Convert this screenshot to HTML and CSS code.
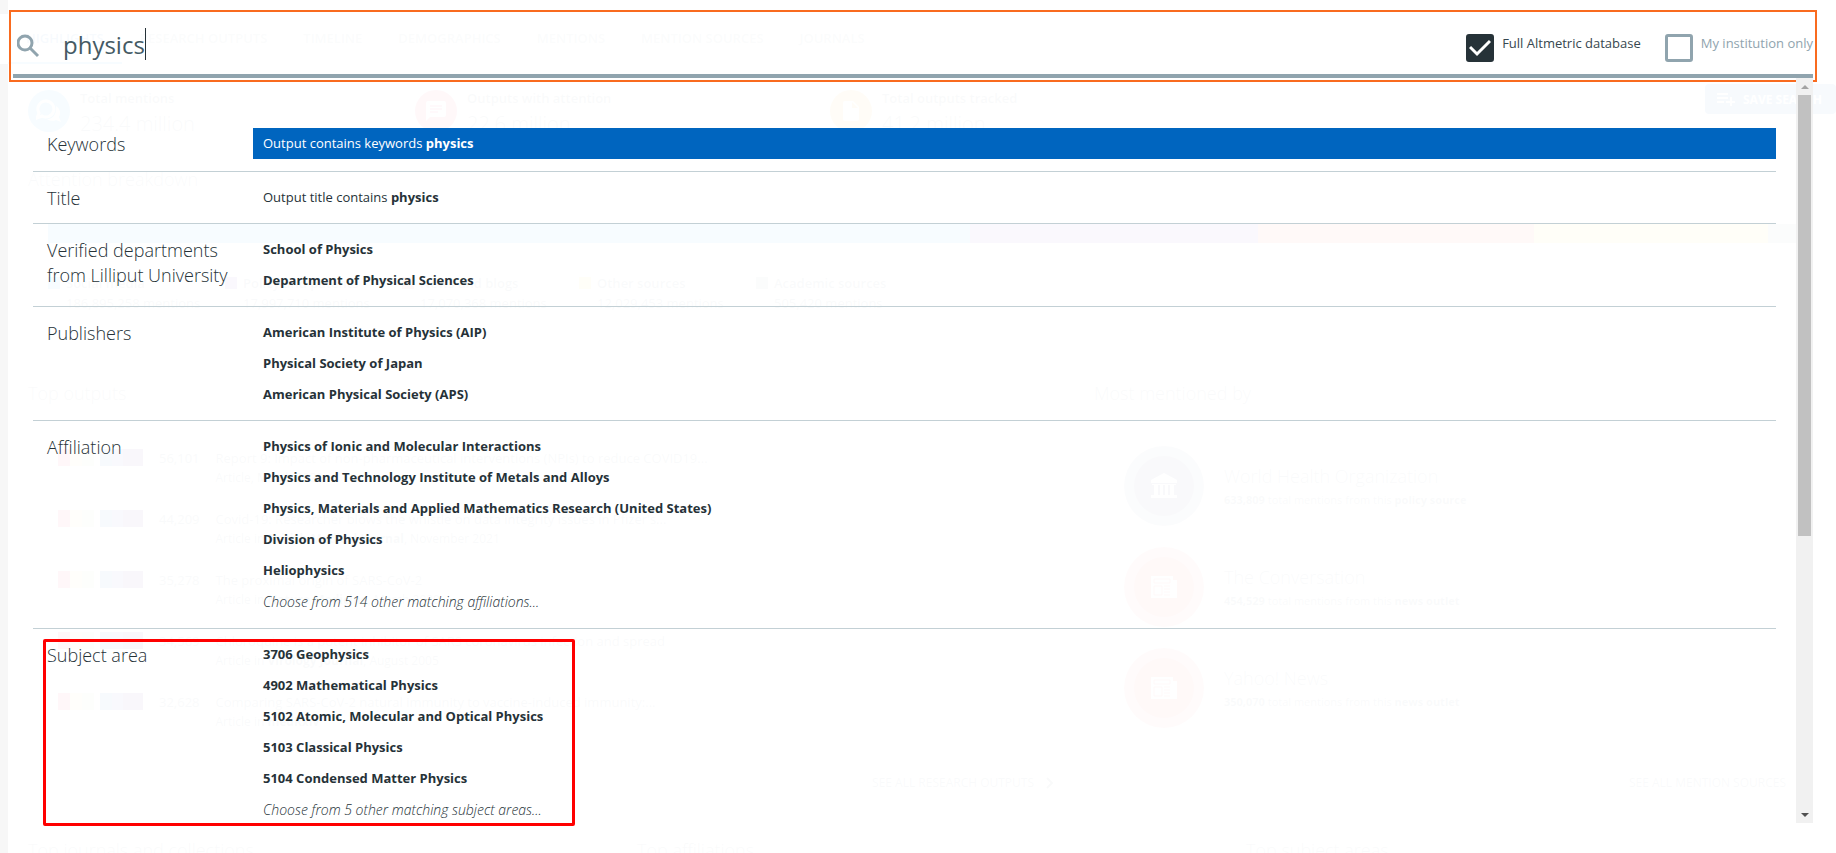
FILE: index.html
```html
<!DOCTYPE html>
<html lang="en">
<head>
    <meta charset="UTF-8">
    <meta name="viewport" content="width=device-width, initial-scale=1.0">
    <title>Altmetric Explorer</title>
    <link rel="stylesheet" href="styles.css">
</head>
<body>
    <div class="dashboard">
        <nav class="tabs">
            <a class="tab active" href="#">HIGHLIGHTS</a>
            <a class="tab" href="#">RESEARCH OUTPUTS</a>
            <a class="tab" href="#">TIMELINE</a>
            <a class="tab" href="#">DEMOGRAPHICS</a>
            <a class="tab" href="#">MENTIONS</a>
            <a class="tab" href="#">MENTION SOURCES</a>
            <a class="tab" href="#">JOURNALS</a>
        </nav>

        <div class="stats">
            <div class="stat">
                <span class="stat-icon blue">
                    <svg width="26" height="24" viewBox="0 0 26 24"><path d="M10 2a8 8 0 1 1-4 15l-5 2 2-5A8 8 0 0 1 10 2z" fill="none" stroke="#fff" stroke-width="3"/><path d="M20 7a8 8 0 0 1 3 11l2 5-5-2a9 9 0 0 1-9-1c6 0 10-5 9-13z" fill="#fff"/></svg>
                </span>
                <div>
                    <div class="stat-title">Total mentions</div>
                    <div class="stat-value">234.4 million</div>
                </div>
            </div>
            <div class="stat">
                <span class="stat-icon red">
                    <svg width="20" height="20" viewBox="0 0 20 20"><path d="M0 2a2 2 0 0 1 2-2h16a2 2 0 0 1 2 2v12a2 2 0 0 1-2 2H4l-4 4z" fill="#fff"/><path d="M4 5h12M4 8h12M4 11h8" stroke="#e91e4f" stroke-width="1.5"/></svg>
                </span>
                <div>
                    <div class="stat-title">Outputs with attention</div>
                    <div class="stat-value">22.6 million</div>
                </div>
            </div>
            <div class="stat">
                <span class="stat-icon amber">
                    <svg width="16" height="20" viewBox="0 0 16 20"><path d="M2 0h8l6 6v12a2 2 0 0 1-2 2H2a2 2 0 0 1-2-2V2a2 2 0 0 1 2-2z" fill="#fff"/><path d="M9 1v6h6z" fill="#ffa000"/></svg>
                </span>
                <div>
                    <div class="stat-title">Total outputs tracked</div>
                    <div class="stat-value">41.2 million</div>
                </div>
            </div>
            <button class="save" type="button">
                <svg width="18" height="14" viewBox="0 0 18 14"><path d="M0 2h11M0 6h11M0 10h7M14 5v9M9 10h9" stroke="#fff" stroke-width="2"/></svg>
                SAVE SEARCH
            </button>
        </div>

        <section class="breakdown">
            <h2>Attention breakdown</h2>
            <div class="bar">
                <span class="social"></span>
                <span class="policy"></span>
                <span class="news"></span>
                <span class="other"></span>
                <span class="academic"></span>
            </div>
            <ul class="legend">
                <li><i class="social"></i><div><b>Social media</b><p>186,895,258 mentions</p></div></li>
                <li><i class="policy"></i><div><b>Policy and patents</b><p>17,997,710 mentions</p></div></li>
                <li><i class="news"></i><div><b>News and blogs</b><p>17,070,368 mentions</p></div></li>
                <li><i class="other"></i><div><b>Other sources</b><p>12,029,453 mentions</p></div></li>
                <li><i class="academic"></i><div><b>Academic sources</b><p>505,420 mentions</p></div></li>
            </ul>
        </section>

        <div class="cards">
            <section class="outputs">
                <h2>Top outputs</h2>
                <div class="card">
                    <div class="output"><span class="strip"></span><span class="score">56,101</span><div><p class="name">Report 9: Impact of non-pharmaceutical interventions (NPIs) to reduce COVID19...</p><p class="meta">Article, March 2020</p></div></div>
                    <div class="output"><span class="strip"></span><span class="score">44,209</span><div><p class="name">Covid-19: Researcher blows the whistle on data integrity issues in Pfizer's...</p><p class="meta">Article in <b>British Medical Journal</b>, November 2021</p></div></div>
                    <div class="output"><span class="strip"></span><span class="score">35,278</span><div><p class="name">The proximal origin of SARS-CoV-2</p><p class="meta">Article in <b>Nature Medicine</b>, March 2020</p></div></div>
                    <div class="output"><span class="strip"></span><span class="score">34,569</span><div><p class="name">Chloroquine is a potent inhibitor of SARS coronavirus infection and spread</p><p class="meta">Article in <b>Virology Journal</b>, August 2005</p></div></div>
                    <div class="output"><span class="strip"></span><span class="score">32,628</span><div><p class="name">Comparing SARS-CoV-2 natural immunity to vaccine-induced immunity:...</p><p class="meta">Article in <b>medRxiv</b></p></div></div>
                    <a class="more" href="#">SEE ALL RESEARCH OUTPUTS <svg width="8" height="12" viewBox="0 0 8 12"><path d="M1 1l5 5-5 5" fill="none" stroke="#455a64" stroke-width="2"/></svg></a>
                </div>
            </section>
            <section class="mentioned">
                <h2>Most mentioned by</h2>
                <div class="card">
                    <div class="source">
                        <span class="disc navy"><svg width="28" height="26" viewBox="0 0 28 26"><path d="M14 0l13 7v3H1V7zM2 11h24v1H2zM4 12h4v10H4zM10 12h3v10h-3zM15 12h3v10h-3zM20 12h4v10h-4zM1 22h26v3H1z" fill="#fff"/></svg></span>
                        <div><p class="source-name">World Health Organization</p><p class="source-meta"><b>633,809</b> total mentions from this <b>policy source</b></p></div>
                    </div>
                    <div class="source">
                        <span class="disc crimson"><svg width="26" height="26" viewBox="0 0 26 26"><path d="M0 2h22v4h4v18H0z" fill="#fff"/><path d="M3 5h16v4H3zM3 12h8v9H3zM13 12h6M13 15h6M13 18h6M13 21h6" fill="none" stroke="#e53935"/></svg></span>
                        <div><p class="source-name">The Conversation</p><p class="source-meta"><b>454,529</b> total mentions from this <b>news outlet</b></p></div>
                    </div>
                    <div class="source">
                        <span class="disc crimson"><svg width="26" height="26" viewBox="0 0 26 26"><path d="M0 2h22v4h4v18H0z" fill="#fff"/><path d="M3 5h16v4H3zM3 12h8v9H3zM13 12h6M13 15h6M13 18h6M13 21h6" fill="none" stroke="#e53935"/></svg></span>
                        <div><p class="source-name">Yahoo! News</p><p class="source-meta"><b>350,070</b> total mentions from this <b>news outlet</b></p></div>
                    </div>
                    <a class="more" href="#">SEE ALL MENTION SOURCES <svg width="8" height="12" viewBox="0 0 8 12"><path d="M1 1l5 5-5 5" fill="none" stroke="#455a64" stroke-width="2"/></svg></a>
                </div>
            </section>
        </div>

        <div class="bottom">
            <h2>Top journals and collections</h2>
            <h2>Top affiliations</h2>
            <h2>Top subject areas</h2>
        </div>
    </div>

    <div class="overlay">
        <form class="search">
            <div class="search-bar">
                <svg class="search-icon" width="24" height="24" viewBox="0 0 24 24"><circle cx="8" cy="9" r="7" fill="none" stroke="#90a4ae" stroke-width="3"/><path d="M13 14l8 8" stroke="#90a4ae" stroke-width="3"/></svg>
                <input class="query" type="text" value="physics" aria-label="Search">
                <div class="scopes">
                    <label class="scope checked"><input type="checkbox" checked>Full Altmetric database</label>
                    <label class="scope"><input type="checkbox">My institution only</label>
                </div>
            </div>
        </form>

        <div class="panel">
            <div class="results">
                <section class="group keywords">
                    <h3>Keywords</h3>
                    <ul>
                        <li><a class="selected" href="#">Output contains keywords <b>physics</b></a></li>
                    </ul>
                </section>
                <section class="group">
                    <h3>Title</h3>
                    <ul>
                        <li><a href="#">Output title contains <b>physics</b></a></li>
                    </ul>
                </section>
                <section class="group">
                    <h3>Verified departments from Lilliput University</h3>
                    <ul>
                        <li><a href="#"><b>School of Physics</b></a></li>
                        <li><a href="#"><b>Department of Physical Sciences</b></a></li>
                    </ul>
                </section>
                <section class="group">
                    <h3>Publishers</h3>
                    <ul>
                        <li><a href="#"><b>American Institute of Physics (AIP)</b></a></li>
                        <li><a href="#"><b>Physical Society of Japan</b></a></li>
                        <li><a href="#"><b>American Physical Society (APS)</b></a></li>
                    </ul>
                </section>
                <section class="group">
                    <h3>Affiliation</h3>
                    <ul>
                        <li><a href="#"><b>Physics of Ionic and Molecular Interactions</b></a></li>
                        <li><a href="#"><b>Physics and Technology Institute of Metals and Alloys</b></a></li>
                        <li><a href="#"><b>Physics, Materials and Applied Mathematics Research (United States)</b></a></li>
                        <li><a href="#"><b>Division of Physics</b></a></li>
                        <li><a href="#"><b>Heliophysics</b></a></li>
                        <li><a href="#"><em>Choose from 514 other matching affiliations...</em></a></li>
                    </ul>
                </section>
                <section class="group marked">
                    <h3>Subject area</h3>
                    <ul>
                        <li><a href="#"><b>3706 Geophysics</b></a></li>
                        <li><a href="#"><b>4902 Mathematical Physics</b></a></li>
                        <li><a href="#"><b>5102 Atomic, Molecular and Optical Physics</b></a></li>
                        <li><a href="#"><b>5103 Classical Physics</b></a></li>
                        <li><a href="#"><b>5104 Condensed Matter Physics</b></a></li>
                        <li><a href="#"><em>Choose from 5 other matching subject areas...</em></a></li>
                    </ul>
                </section>
            </div>
            <div class="scrollbar">
                <button type="button" aria-label="Scroll up"><svg width="8" height="4" viewBox="0 0 8 4"><path d="M0 4l4-4 4 4z" fill="#a3a3a3"/></svg></button>
                <div class="track"><div class="thumb"></div></div>
                <button type="button" aria-label="Scroll down"><svg width="8" height="4" viewBox="0 0 8 4"><path d="M0 0h8L4 4z" fill="#505050"/></svg></button>
            </div>
        </div>
    </div>
</body>
</html>
```
FILE: styles.css
```css
*, *::after {
    box-sizing: border-box;
}
body {
    margin: 0;
    height: 100vh;
    overflow: hidden;
    position: relative;
    font-family: "Open Sans", sans-serif;
    font-size: 13px;
    color: #263238;
}
h2, h3, p, ul {
    margin: 0;
    padding: 0;
}
ul {
    list-style: none;
}
a {
    color: inherit;
    text-decoration: none;
}

/* dashboard behind the search */
.dashboard {
    height: 100vh;
    overflow: hidden;
    padding-top: 14px;
    background-color: #f7f7f7;
    color: #546e7a;
}
.dashboard h2 {
    font-size: 18px;
    line-height: 28px;
    font-weight: 300;
}
.tabs {
    display: flex;
    background-color: #fff;
    height: 50px;
    padding-left: 8px;
}
.tab {
    padding: 0 18px;
    line-height: 48px;
    font-size: 13px;
    font-weight: 600;
    color: #78909c;
}
.tab.active {
    color: #0065bf;
    border-bottom: 2px solid #039be5;
}
.stats {
    display: grid;
    grid-template-columns: 387px 415px 1fr 131px;
    height: 100px;
    padding: 20px 0 0 28px;
}
.stat {
    display: flex;
    gap: 10px;
}
.stat-icon {
    display: flex;
    align-items: center;
    justify-content: center;
    width: 42px;
    height: 42px;
    margin-top: 6px;
    border-radius: 50%;
}
.blue {
    background-color: #039be5;
}
.red {
    background-color: #e91e4f;
}
.amber {
    background-color: #ffa000;
}
.stat-title {
    line-height: 28px;
    font-weight: 600;
}
.stat-value {
    font-size: 20px;
    line-height: 24px;
    font-weight: 300;
}
.save {
    display: flex;
    align-items: center;
    gap: 8px;
    height: 30px;
    padding: 0 12px;
    border: none;
    border-radius: 4px;
    background-color: #0065bf;
    color: #fff;
    font: 700 12px "Open Sans", sans-serif;
    white-space: nowrap;
}
.breakdown {
    height: 189px;
    margin-left: 28px;
    padding-top: 1px;
    background-color: #fff;
}
.bar {
    display: grid;
    grid-template-columns: 922fr 288fr 276fr 234fr 38fr;
    height: 19px;
    margin: 31px 30px 30px 20px;
}
.social {
    background-color: #039be5;
}
.policy {
    background-color: #5e35b1;
}
.news {
    background-color: #e53935;
}
.other {
    background-color: #fdd835;
}
.academic {
    background-color: #78909c;
}
.legend {
    display: flex;
    padding-left: 20px;
}
.legend li {
    display: flex;
    gap: 6px;
    width: 177px;
    line-height: 20px;
}
.legend b {
    font-weight: 600;
}
.legend i {
    width: 12px;
    height: 12px;
    margin-top: 4px;
}
.cards {
    display: grid;
    grid-template-columns: 1066px 1fr;
    padding: 26px 0 0 28px;
}
.card {
    display: flex;
    flex-direction: column;
    height: 384px;
    margin-top: 12px;
    padding: 16px 30px 10px;
    background-color: #fff;
}
.outputs .card {
    margin-right: 20px;
    padding: 30px 20px 10px 30px;
}
.output {
    display: flex;
    align-items: flex-start;
    gap: 12px;
    height: 61px;
    line-height: 19px;
}
.strip {
    width: 85px;
    height: 17px;
    background: linear-gradient(90deg, #ff1744 0 14%, #ffe082 14% 28%, #c5e1a5 28% 42%, #fff 42% 50%, #1565c0 50% 64%, #3949ab 64% 76%, #4a148c 76%);
}
.score {
    padding: 0 4px;
    background-color: #eceff1;
}
.meta {
    font-size: 12px;
}
.more {
    display: flex;
    align-items: center;
    justify-content: flex-end;
    gap: 12px;
    margin-top: auto;
    line-height: 20px;
    font-size: 12px;
}
.source {
    display: flex;
    align-items: center;
    gap: 20px;
    height: 101px;
}
.disc {
    display: flex;
    align-items: center;
    justify-content: center;
    width: 80px;
    height: 80px;
    border: 10px solid #fff6;
    border-radius: 50%;
}
.navy {
    background-color: #3f517f;
}
.crimson {
    background-color: #e53935;
}
.source-name {
    font-size: 18px;
    line-height: 28px;
    font-weight: 300;
}
.source-meta {
    font-size: 11px;
    line-height: 20px;
}
.bottom {
    display: grid;
    grid-template-columns: 609px 609px 1fr;
    padding: 33px 0 0 28px;
}

/* search overlay */
.overlay {
    position: absolute;
    top: 0;
    right: 0;
    bottom: 0;
    left: 8px;
    display: flex;
    flex-direction: column;
    padding: 10px 19px 30px 1px;
    background-color: rgba(255, 255, 255, 0.97);
}
.search {
    border: 2px solid #f96b1f;
    padding: 2px;
}
.search-bar {
    display: flex;
    align-items: center;
    height: 64px;
    padding-left: 4px;
    border-bottom: 4px solid #90a4ae;
}
.search-icon {
    margin-top: 4px;
}
.query {
    field-sizing: content;
    height: 32px;
    margin-left: 22px;
    padding: 0;
    border: none;
    border-right: 1px solid #263238;
    outline: none;
    background: none;
    font-family: "Open Sans", sans-serif;
    font-size: 24px;
    font-weight: 400;
    color: #455a64;
}
.scopes {
    display: flex;
    gap: 24px;
    margin-left: auto;
    padding-top: 5px;
}
.scope {
    display: flex;
    gap: 8px;
    line-height: 24px;
    color: #90a4ae;
}
.scope.checked {
    color: #37474f;
}
.scope input {
    appearance: none;
    width: 28px;
    height: 28px;
    margin: 3px 0 0;
    border: 3px solid #90a4ae;
    border-radius: 3px;
}
.scope input:checked {
    border-color: #263238;
    background: #263238 url("data:image/svg+xml,%3Csvg xmlns='http://www.w3.org/2000/svg' viewBox='0 0 22 22'%3E%3Cpath d='M1 10l7 7L21 4' fill='none' stroke='white' stroke-width='3'/%3E%3C/svg%3E") center / 22px no-repeat;
}
.panel {
    display: flex;
    flex: 1;
    min-height: 0;
    margin: -4px 4px 0 0;
}
.results {
    flex: 1;
    padding: 40px 20px 0 24px;
}
.group {
    display: flex;
    padding: 10px 0;
    border-bottom: 1px solid #c3d0d5;
}
.group.keywords {
    padding-bottom: 12px;
}
.group h3 {
    width: 220px;
    padding: 4px 20px 0 14px;
    font-size: 18px;
    line-height: 25px;
    font-weight: 300;
}
.group ul {
    flex: 1;
}
.group a {
    display: block;
    padding: 0 10px;
    line-height: 31px;
}
.group a.selected {
    background-color: #0065bf;
    color: #fff;
}
.group em {
    font-size: 14px;
    font-weight: 300;
}
.marked {
    position: relative;
    border-bottom: none;
}
.marked::after {
    content: "";
    position: absolute;
    top: 10px;
    left: 10px;
    width: 532px;
    height: 187px;
    border: 3px solid #f00;
    border-radius: 2px;
    pointer-events: none;
}
.scrollbar {
    display: flex;
    flex-direction: column;
    width: 17px;
    background-color: #f1f1f1;
}
.scrollbar button {
    display: flex;
    align-items: center;
    justify-content: center;
    height: 17px;
    padding: 0;
    border: none;
    background: none;
}
.track {
    flex: 1;
    padding: 0 2px;
}
.thumb {
    height: 62%;
    background-color: #c1c1c1;
}
```
